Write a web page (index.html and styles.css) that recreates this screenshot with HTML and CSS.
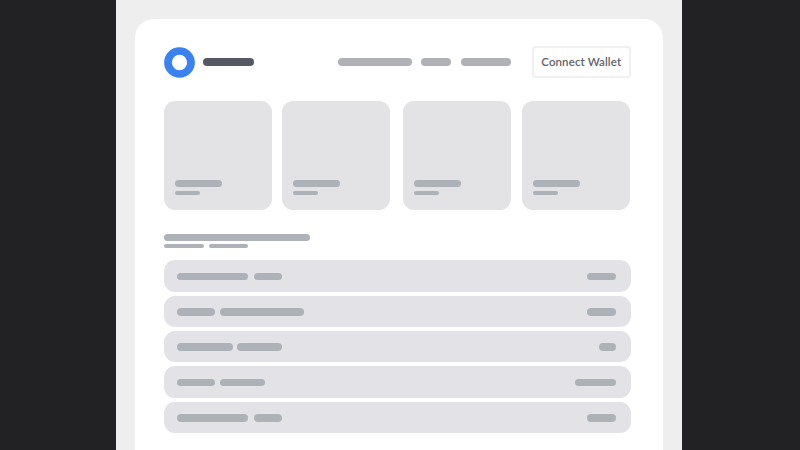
FILE: index.html
```
<!DOCTYPE html>
<html lang="en">
<head>
<meta charset="utf-8">
<title>Wallet dashboard</title>
<link rel="stylesheet" href="styles.css">
</head>
<body>
<div class="stage">
  <main class="panel">
    <header class="header">
      <svg class="logo" viewBox="0 0 31 31"><circle cx="15.5" cy="15.5" r="11.5" fill="none" stroke="#3b82f0" stroke-width="7.7"/></svg>
      <span class="bar brand"></span>
      <nav class="nav">
        <span class="bar w75"></span>
        <span class="bar w30"></span>
        <span class="bar w50"></span>
      </nav>
      <button class="connect">Connect Wallet</button>
    </header>
    <section class="cards">
      <article class="card"><span class="bar title"></span><span class="bar sub"></span></article>
      <article class="card"><span class="bar title"></span><span class="bar sub"></span></article>
      <article class="card"><span class="bar title"></span><span class="bar sub"></span></article>
      <article class="card"><span class="bar title"></span><span class="bar sub"></span></article>
    </section>
    <section class="heading">
      <span class="bar"></span>
      <div class="meta"><span class="bar"></span><span class="bar"></span></div>
    </section>
    <section class="rows">
      <div class="row"><span class="bar w71"></span><span class="bar w28"></span><span class="bar w29 end"></span></div>
      <div class="row"><span class="bar w37"></span><span class="bar w84"></span><span class="bar w29 end"></span></div>
      <div class="row tight"><span class="bar w56"></span><span class="bar w45"></span><span class="bar w17 end"></span></div>
      <div class="row"><span class="bar w37"></span><span class="bar w45"></span><span class="bar w41 end"></span></div>
      <div class="row"><span class="bar w71"></span><span class="bar w28"></span><span class="bar w29 end"></span></div>
    </section>
  </main>
</div>
</body>
</html>
```
FILE: styles.css
```
* { box-sizing: border-box; }
body {
  margin: 0;
  height: 450px;
  overflow: hidden;
  background: #222224;
  font-family: Lato, "Liberation Sans", sans-serif;
}
.stage {
  width: 565.5px;
  height: 450px;
  margin-left: 116.3px;
  padding: 19px 19px 0 19.2px;
  background: #eeeeef;
}
.panel {
  height: 431px;
  padding: 26px 32.3px 0 29px;
  background: #fff;
  border-radius: 19px 19px 0 0;
}
.bar {
  display: block;
  flex: none;
  height: 7.5px;
  border-radius: 4px;
  background: #adb2b8;
}
.header { display: flex; align-items: center; height: 34px; }
.logo { width: 31px; height: 31px; }
.brand { width: 51px; margin-left: 8px; background: #565963; }
.nav { display: flex; gap: 9.3px; margin-left: auto; }
.nav .bar { background: #b0b1b6; }
.w75 { width: 74px; }
.w30 { width: 30.3px; }
.w50 { width: 50.3px; }
.connect {
  width: 98.5px;
  height: 31.5px;
  margin: 0 0 0 21px;
  padding: 0 0 1px;
  border: 2px solid #f0f0f3;
  border-radius: 4px;
  background: #fff;
  color: #626267;
  font: 600 11.5px Lato, sans-serif;
  letter-spacing: 0.1px;
  white-space: nowrap;
}
.cards {
  display: grid;
  grid-template-columns: repeat(4, 108px);
  justify-content: space-between;
  margin-top: 22px;
}
.card {
  height: 108.5px;
  padding: 78.5px 11px 0;
  border-radius: 11px;
  background: #e3e3e5;
}
.card:nth-child(2) { margin: 0 1.5px 0 -1.5px; }
.title { width: 46.7px; }
.sub { width: 24.5px; height: 4px; margin-top: 3.8px; }
.heading { padding-top: 24.3px; height: 50.7px; }
.heading > .bar { width: 145.5px; }
.meta { display: flex; gap: 5.5px; margin-top: 3.2px; }
.meta .bar { width: 39.1px; height: 4px; }
.rows { display: grid; gap: 4px; }
.row {
  display: flex;
  align-items: center;
  gap: 5.5px;
  height: 31.4px;
  padding: 1px 14.5px 0 13px;
  border-radius: 11px;
  background: #e3e3e7;
}
.tight { gap: 3.8px; }
.end { margin-left: auto; }
.w71 { width: 71px; }
.w28 { width: 28px; }
.w29 { width: 29px; }
.w37 { width: 37.2px; }
.w84 { width: 83.8px; }
.w56 { width: 56px; }
.w45 { width: 44.8px; }
.w17 { width: 17px; }
.w41 { width: 41.5px; }
```
